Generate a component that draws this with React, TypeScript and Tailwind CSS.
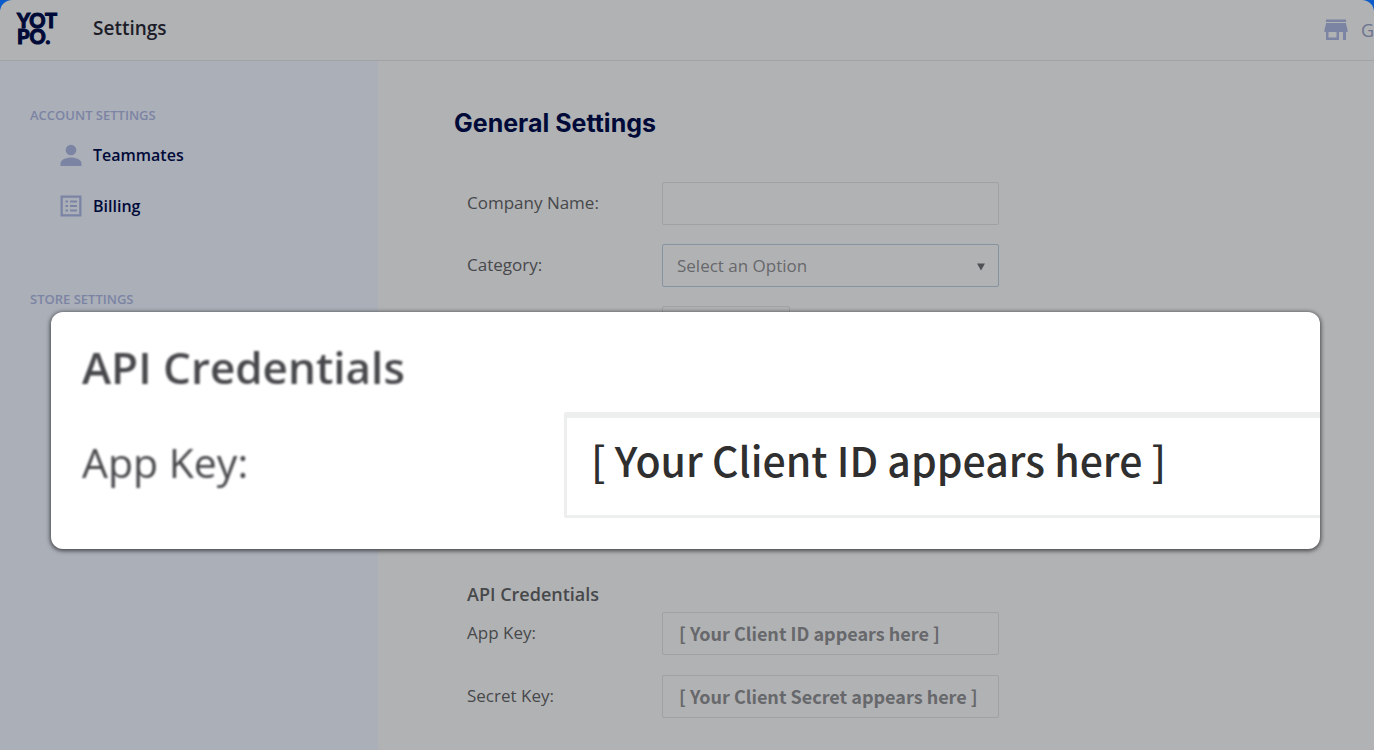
import React from "react";

const inputStyle =
  "h-[43px] w-full max-w-[337px] rounded-xs border border-[#9fa1a4] bg-transparent px-4 text-[#67686b]";

const StoreIcon = () => (
  <svg viewBox="0 0 24 22" className="h-[22px] w-6 shrink-0" fill="#7c84a4" aria-hidden="true">
    <path d="M2 0.500h20v2.500H2z" />
    <path
      fillRule="evenodd"
      d="M2.200 4h19.600L23.500 10.500v2.500H22v8h-3v-8h-4v8H2v-8H0.500v-2.500zM4.500 13v5.500h8V13z"
    />
  </svg>
);

const PersonIcon = () => (
  <svg viewBox="0 0 22 22" className="size-[22px] shrink-0" fill="#7c84a4" aria-hidden="true">
    <circle cx="11" cy="6" r="5.300" />
    <path d="M0.500 22v-2.500c0-3.800 5.500-6 10.500-6s10.500 2.200 10.500 6V22z" />
  </svg>
);

const BillingIcon = () => (
  <svg viewBox="0 0 22 22" className="size-[22px] shrink-0" fill="#7c84a4" aria-hidden="true">
    <path fillRule="evenodd" d="M0.500 0.500h21v21h-21zM2.800 2.800v16.400h16.400V2.800z" />
    <path d="M5.500 5.500H8v2H5.500zM10 5.500h7v2h-7zM5.500 10H8v2H5.500zM10 10h7v2h-7zM5.500 14.500H8v2H5.500zM10 14.500h7v2h-7z" />
  </svg>
);

const Header = () => (
  <header className="flex h-[61px] items-center border-b border-[#a0a2a5] pl-[17px]">
    <div className="flex w-[76px] flex-col pb-1 font-['Lato',sans-serif] text-xl leading-4 font-black text-[#000a38] [-webkit-text-stroke:1px_#000a38]">
      <span>YOT</span>
      <span>PO.</span>
    </div>
    <span className="pb-1 text-[19px] font-semibold text-[#1c1d29]">Settings</span>
    <div className="-mr-3 ml-auto flex items-center gap-[13px] text-lg text-[#6c748f]">
      <StoreIcon />
      <span className="w-[25px] overflow-hidden">G</span>
    </div>
  </header>
);

const Sidebar = () => (
  <nav className="w-[378px] shrink-0 bg-[#abafb8] pt-11 pl-[30px] font-semibold">
    <h2 className="text-[13px] leading-5 text-[#7c84a4]">ACCOUNT SETTINGS</h2>
    <ul className="mt-[19px] mb-[72px] flex flex-col gap-[29px] pl-[30px] leading-[22px] text-[#000a38]">
      <li>
        <a href="#teammates" className="flex items-center gap-[11px]">
          <PersonIcon />
          Teammates
        </a>
      </li>
      <li>
        <a href="#billing" className="flex items-center gap-[11px]">
          <BillingIcon />
          Billing
        </a>
      </li>
    </ul>
    <h2 className="text-[13px] leading-5 text-[#7c84a4]">STORE SETTINGS</h2>
  </nav>
);

type RowProps = {
  id: string;
  label: string;
  children: React.ReactNode;
};

const Row = ({ id, label, children }: RowProps) => (
  <div className="flex h-[43px] items-center">
    <label htmlFor={id} className="w-[195px] shrink-0 pb-0.5 text-[17px] text-[#47484b]">
      {label}
    </label>
    {children}
  </div>
);

const GeneralSettings = () => (
  <main className="min-w-0 grow pt-11 pr-8 pl-[76px]">
    <h1 className="font-['Inter',sans-serif] text-[25px] leading-9 font-bold text-[#000a38]">
      General Settings
    </h1>
    <form className="mt-[41px] pl-[13px]">
      <div className="flex flex-col gap-[19px]">
        <Row id="company" label="Company Name:">
          <input id="company" type="text" className={inputStyle} />
        </Row>
        <Row id="category" label="Category:">
          <div className="relative w-full max-w-[337px]">
            <select
              id="category"
              className="block h-[43px] w-full appearance-none rounded-xs border border-[#8693a0] px-[14px] text-[17px] text-[#67686b]"
            >
              <option>Select an Option</option>
            </select>
            <svg
              viewBox="0 0 8 8"
              className="pointer-events-none absolute top-[19px] right-[14px] size-2"
              fill="#505154"
              aria-hidden="true"
            >
              <path d="M0 0.500h8L4 7.500z" />
            </svg>
          </div>
        </Row>
        <div className="pl-[195px]">
          <button
            type="button"
            aria-label="Upload logo"
            className="block h-[43px] w-32 rounded-xs border border-[#9fa1a4]"
          />
        </div>
      </div>
      <h2 className="mt-[233px] mb-[6px] text-lg leading-6 font-semibold text-[#47484b]">
        API Credentials
      </h2>
      <div className="flex flex-col gap-5 pb-8">
        <Row id="app-key" label="App Key:">
          <input
            id="app-key"
            type="text"
            readOnly
            defaultValue="[ Your Client ID appears here ]"
            className={`${inputStyle} pb-0.5 font-['Noto_Sans_CJK_SC',sans-serif] text-lg font-bold`}
          />
        </Row>
        <Row id="secret-key" label="Secret Key:">
          <input
            id="secret-key"
            type="text"
            readOnly
            defaultValue="[ Your Client Secret appears here ]"
            className={`${inputStyle} pb-0.5 font-['Noto_Sans_CJK_SC',sans-serif] text-lg font-bold`}
          />
        </Row>
      </div>
    </form>
  </main>
);

// Magnified view of the App Key row
const Callout = () => (
  <section className="absolute top-[312px] right-[54px] left-[51px] overflow-hidden rounded-xl bg-white pt-[25px] pb-[31px] pl-[31px] text-[#47484b] shadow-[0_1px_4px_1px_rgba(0,0,0,0.6)]">
    <h2 className="text-[44px] leading-[60px] font-semibold blur-[1px]">API Credentials</h2>
    <div className="mt-[15px] flex items-center">
      <label htmlFor="app-key-zoom" className="w-[482px] shrink-0 pb-1 text-[41px] blur-[1px]">
        App Key:
      </label>
      <input
        id="app-key-zoom"
        type="text"
        readOnly
        defaultValue="[ Your Client ID appears here ]"
        className="-mr-2 h-[106px] min-w-0 grow rounded-xs border-[3px] border-t-[6px] border-[#ecefee] pb-4 pl-6 font-['Noto_Sans_CJK_SC',sans-serif] text-[41px] font-medium text-[#2f2f30]"
      />
    </div>
  </section>
);

export default function App() {
  return (
    <div className="bg-[#0a5bc9]">
      <div className="relative flex h-screen flex-col overflow-hidden rounded-t-xl bg-[#b1b2b4] font-['Open_Sans',sans-serif]">
        <Header />
        <div className="flex grow">
          <Sidebar />
          <GeneralSettings />
        </div>
        <Callout />
      </div>
    </div>
  );
}
